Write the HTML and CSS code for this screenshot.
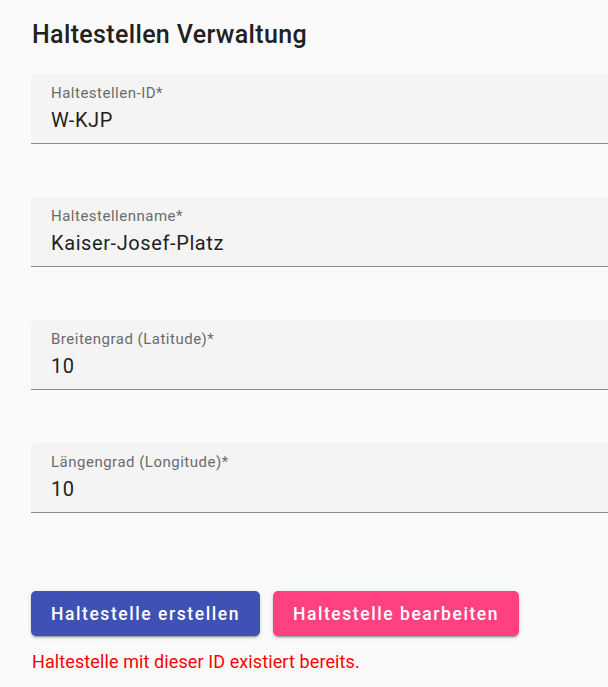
FILE: index.html
```html
<!DOCTYPE html>
<html lang="de">
<head>
<meta charset="utf-8">
<title>Haltestellen Verwaltung</title>
<link rel="stylesheet" href="styles.css">
</head>
<body>
<main class="page">
  <h1 class="title">Haltestellen Verwaltung</h1>
  <form class="form">
    <div class="field">
      <label class="field-label">Haltestellen-ID*</label>
      <div class="field-value">W-KJP</div>
    </div>
    <div class="field">
      <label class="field-label">Haltestellenname*</label>
      <div class="field-value">Kaiser-Josef-Platz</div>
    </div>
    <div class="field">
      <label class="field-label">Breitengrad (Latitude)*</label>
      <div class="field-value">10</div>
    </div>
    <div class="field">
      <label class="field-label">Längengrad (Longitude)*</label>
      <div class="field-value">10</div>
    </div>
    <div class="actions">
      <button type="button" class="btn btn-primary">Haltestelle erstellen</button>
      <button type="button" class="btn btn-accent">Haltestelle bearbeiten</button>
    </div>
    <p class="error">Haltestelle mit dieser ID existiert bereits.</p>
  </form>
</main>
</body>
</html>
```
FILE: styles.css
```css
html, body {
  margin: 0;
  padding: 0;
  background: #fafafa;
  font-family: Roboto, "Liberation Sans", sans-serif;
  color: rgba(0, 0, 0, 0.87);
}

.page {
  padding: 19px 0 0 31px;
  overflow: hidden;
}

.title {
  margin: 0 0 23px 1px;
  font-size: 25px;
  line-height: 32px;
  font-weight: 500;
  letter-spacing: 0.35px;
  color: #212121;
}

.form {
  display: flex;
  flex-direction: column;
}

.field {
  display: flex;
  flex-direction: column;
  background: #f4f4f4;
  border-radius: 5px 5px 0 0;
  border-bottom: 1px solid #8c8c8c;
  padding: 10px 20px 11px 20px;
  margin-bottom: 53px;
  margin-right: -20px;
}

.field-label {
  font-size: 15px;
  line-height: 18px;
  color: #6b6b6b;
  letter-spacing: 0.5px;
}

.field-value {
  margin-top: 6px;
  font-size: 20px;
  line-height: 24px;
  color: #1f1f1f;
  letter-spacing: 0.6px;
}

.actions {
  display: flex;
  gap: 13px;
  margin-top: 25px;
}

.btn {
  height: 45px;
  padding: 0 20px;
  border: none;
  border-radius: 5px;
  font-family: Roboto, "Liberation Sans", sans-serif;
  font-size: 17.5px;
  font-weight: 500;
  letter-spacing: 1.56px;
  color: #ffffff;
  box-shadow: 0 3px 1px -2px rgba(0,0,0,.2), 0 2px 2px 0 rgba(0,0,0,.14), 0 1px 5px 0 rgba(0,0,0,.12);
}

.btn-primary {
  background: #3f51b5;
}

.btn-accent {
  background: #ff4081;
}

.error {
  margin: 15px 0 0 1px;
  font-size: 18px;
  line-height: 22px;
  letter-spacing: 0.1px;
  color: #ff0000;
}
```
